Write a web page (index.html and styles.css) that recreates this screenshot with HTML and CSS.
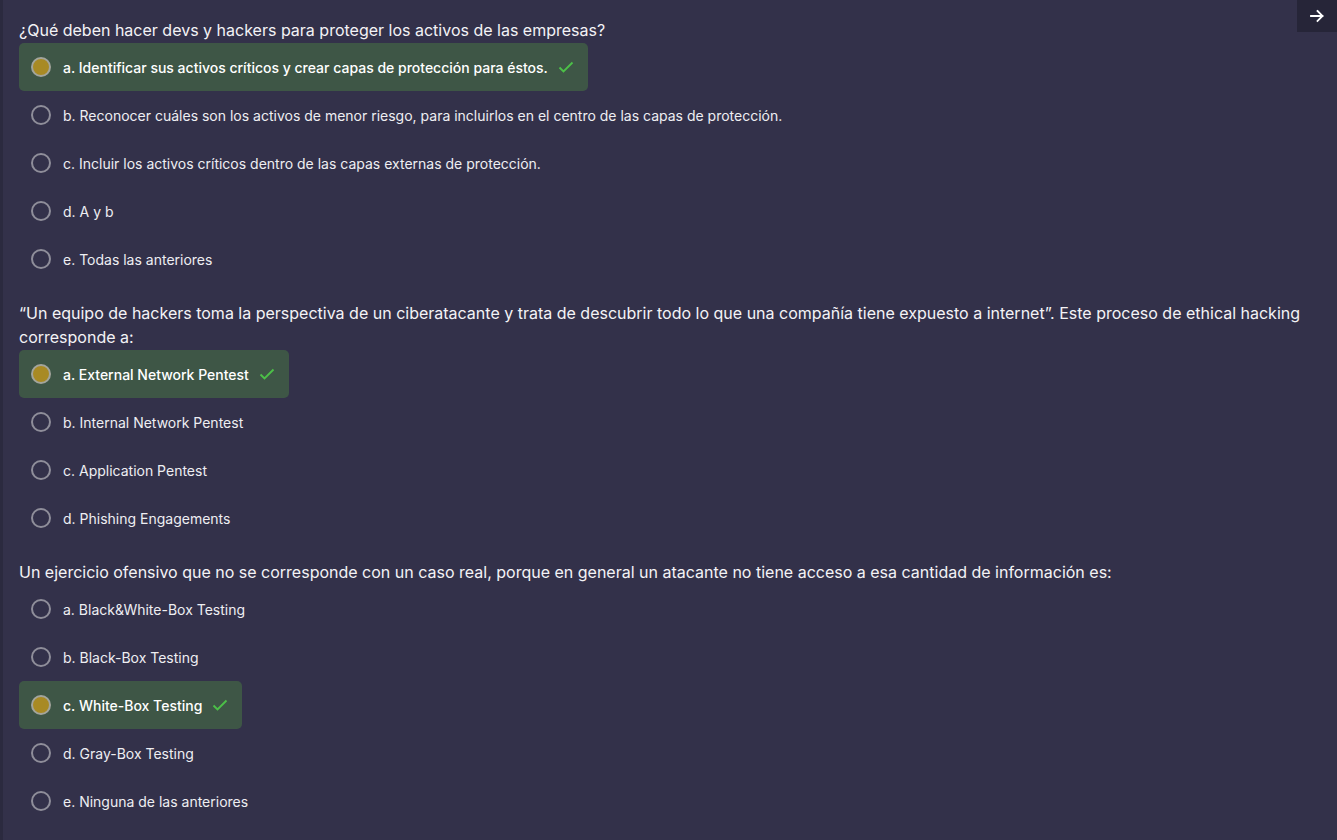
FILE: index.html
```html
<!DOCTYPE html>
<html lang="es">
<head>
<meta charset="utf-8">
<link rel="stylesheet" href="styles.css">
</head>
<body>
<div class="page">
  <aside class="edge"></aside>
  <main class="content">
    <section class="question">
      <p class="q-text">¿Qué deben hacer devs y hackers para proteger los activos de las empresas?</p>
      <ul class="options">
        <li class="option selected"><span class="radio"></span><span class="label">a. Identificar sus activos críticos y crear capas de protección para éstos.</span><svg class="check" viewBox="0 0 16 16" width="16" height="16"><path d="M1.5 8.5 L5.5 12.5 L14.5 3.5" fill="none" stroke="#4cc048" stroke-width="1.9"/></svg></li>
        <li class="option"><span class="radio"></span><span class="label">b. Reconocer cuáles son los activos de menor riesgo, para incluirlos en el centro de las capas de protección.</span></li>
        <li class="option"><span class="radio"></span><span class="label">c. Incluir los activos críticos dentro de las capas externas de protección.</span></li>
        <li class="option"><span class="radio"></span><span class="label">d. A y b</span></li>
        <li class="option"><span class="radio"></span><span class="label">e. Todas las anteriores</span></li>
      </ul>
    </section>
    <section class="question">
      <p class="q-text">“Un equipo de hackers toma la perspectiva de un ciberatacante y trata de descubrir todo lo que una compañía tiene expuesto a internet”. Este proceso de ethical hacking corresponde a:</p>
      <ul class="options">
        <li class="option selected"><span class="radio"></span><span class="label">a. External Network Pentest</span><svg class="check" viewBox="0 0 16 16" width="16" height="16"><path d="M1.5 8.5 L5.5 12.5 L14.5 3.5" fill="none" stroke="#4cc048" stroke-width="1.9"/></svg></li>
        <li class="option"><span class="radio"></span><span class="label">b. Internal Network Pentest</span></li>
        <li class="option"><span class="radio"></span><span class="label">c. Application Pentest</span></li>
        <li class="option"><span class="radio"></span><span class="label">d. Phishing Engagements</span></li>
      </ul>
    </section>
    <section class="question">
      <p class="q-text">Un ejercicio ofensivo que no se corresponde con un caso real, porque en general un atacante no tiene acceso a esa cantidad de información es:</p>
      <ul class="options">
        <li class="option"><span class="radio"></span><span class="label">a. Black&amp;White-Box Testing</span></li>
        <li class="option"><span class="radio"></span><span class="label">b. Black-Box Testing</span></li>
        <li class="option selected"><span class="radio"></span><span class="label">c. White-Box Testing</span><svg class="check" viewBox="0 0 16 16" width="16" height="16"><path d="M1.5 8.5 L5.5 12.5 L14.5 3.5" fill="none" stroke="#4cc048" stroke-width="1.9"/></svg></li>
        <li class="option"><span class="radio"></span><span class="label">d. Gray-Box Testing</span></li>
        <li class="option"><span class="radio"></span><span class="label">e. Ninguna de las anteriores</span></li>
      </ul>
    </section>
  </main>
  <button class="next" aria-label="Siguiente"><svg viewBox="0 0 16 16" width="16" height="16"><path d="M2 8 H13.5 M8.5 3 L13.5 8 L8.5 13" fill="none" stroke="#ffffff" stroke-width="1.8" stroke-linecap="square"/></svg></button>
</div>
</body>
</html>
```
FILE: styles.css
```css
* { box-sizing: border-box; }
html, body {
  margin: 0;
  padding: 0;
  height: 100%;
  background: #33314a;
  overflow: hidden;
}
body {
  font-family: Inter, "Noto Sans", sans-serif;
  color: #ffffff;
}
.page {
  display: flex;
  min-height: 840px;
  position: relative;
}
.edge {
  width: 3px;
  flex: 0 0 3px;
  background: #2b2a3f;
}
.content {
  flex: 1;
  padding: 18px 16px 0 16px;
}
.question {
  margin-bottom: 18px;
}
.q-text {
  margin: 0 0 1px 0;
  font-size: 16px;
  line-height: 24px;
  color: #f3f3f6;
  max-width: 1300px;
}
.options {
  list-style: none;
  margin: 0;
  padding: 0;
}
.option {
  display: flex;
  align-items: center;
  height: 48px;
  padding: 0 12px 0 12px;
  font-size: 14px;
  font-weight: 400;
  color: #eeeef2;
  width: fit-content;
  border-radius: 5px;
}
.option.selected {
  background: #3e5646;
  font-weight: 500;
  color: #ffffff;
  padding-right: 14px;
}
.radio {
  width: 20px;
  height: 20px;
  border-radius: 50%;
  border: 2.5px solid #8f8e9a;
  margin-right: 12px;
  flex: 0 0 20px;
}
.option.selected .radio {
  background: #a88a24;
  border-color: #a3a59c;
}
.check {
  margin-left: 10px;
}
.next {
  position: absolute;
  top: 0;
  right: 0;
  width: 40px;
  height: 32px;
  border: 0;
  padding: 0;
  background: #262538;
  display: flex;
  align-items: center;
  justify-content: center;
}
```
